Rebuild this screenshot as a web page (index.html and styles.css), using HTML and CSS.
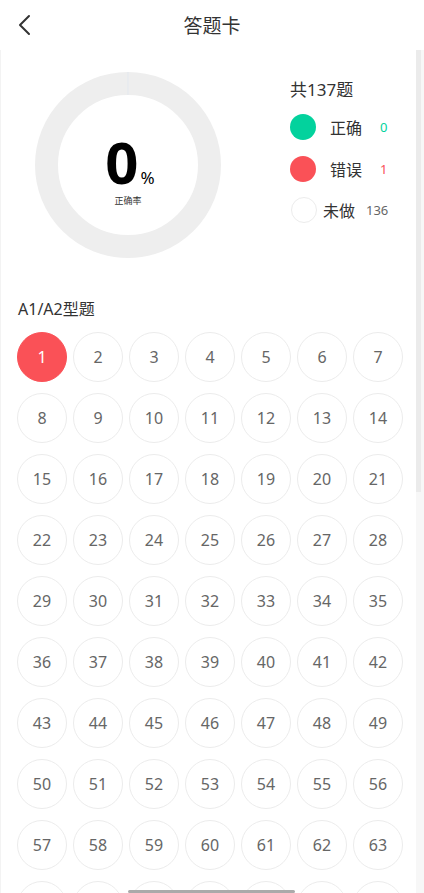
FILE: index.html
```html
<!DOCTYPE html>
<html lang="zh-CN">
<head>
  <meta charset="UTF-8" />
  <title>答题卡</title>
  <link rel="stylesheet" href="styles.css">
</head>
<body>
  <div class="header">
    <svg class="back" width="16" height="24" viewBox="0 0 16 24">
      <path d="M12 3 L3 12 L12 21" fill="none" stroke="#333" stroke-width="2" stroke-linecap="round" stroke-linejoin="round"/>
    </svg>
    <h1>答题卡</h1>
  </div>

  <div class="content">
    <div class="summary">
      <div class="chart">
        <svg width="186" height="186" viewBox="0 0 186 186">
          <circle cx="93" cy="93" r="81.5" fill="none" stroke="#eeeeee" stroke-width="23"/>
          <line x1="93" y1="0" x2="93" y2="23" stroke="#e3e8ef" stroke-width="1"/>
        </svg>
        <div class="rate">
          <div class="rate-num">0<span>%</span></div>
          <div class="rate-label">正确率</div>
        </div>
      </div>

      <div class="legend">
        <div class="total">共137题</div>
        <div class="legend-row">
          <span class="dot green"></span>
          <span class="legend-name">正确</span>
          <span class="legend-count green-text">0</span>
        </div>
        <div class="legend-row">
          <span class="dot red"></span>
          <span class="legend-name">错误</span>
          <span class="legend-count red-text">1</span>
        </div>
        <div class="legend-row">
          <span class="dot empty"></span>
          <span class="legend-name tight">未做</span>
          <span class="legend-count gray-text">136</span>
        </div>
      </div>
    </div>

    <h3 class="section-title">A1/A2型题</h3>
    <div class="grid" id="grid"></div>

    <div class="scroll-track"><div class="scroll-thumb"></div></div>
  </div>

  <div class="home-bar"></div>

  <script>
    const grid = document.getElementById("grid");
    let html = "";
    for (let i = 1; i <= 70; i++) {
      html += `<div class="cell${i === 1 ? " wrong" : ""}">${i}</div>`;
    }
    grid.innerHTML = html;
  </script>
</body>
</html>
```

FILE: styles.css
```css
* {
  box-sizing: border-box;
}

html, body {
  margin: 0;
  padding: 0;
  height: 893px;
  overflow: hidden;
}

body {
  font-family: "Noto Sans", "Noto Sans CJK SC", sans-serif;
  background: #fff;
  color: #333;
}

.header {
  height: 50px;
  display: flex;
  align-items: center;
  justify-content: center;
  position: relative;
}

.header .back {
  position: absolute;
  left: 17px;
  top: 13px;
}

.header h1 {
  margin: 0;
  font-size: 19px;
  font-weight: 400;
  color: #333;
}

.content {
  position: relative;
  height: 843px;
  overflow: hidden;
  border-left: 1px solid #f3f3f3;
}

/* fake scrollbar, the screenshot shows one */
.scroll-track {
  position: absolute;
  top: 0;
  right: 0;
  width: 8px;
  height: 100%;
  background: #f7f7f7;
}

.scroll-thumb {
  width: 5px;
  height: 442px;
  background: #ebebeb;
}

.summary {
  display: flex;
  padding: 22px 0 0 34px;
}

.chart {
  position: relative;
  width: 186px;
  height: 186px;
}

.chart svg {
  display: block;
}

.rate {
  position: absolute;
  inset: 0;
  display: flex;
  flex-direction: column;
  align-items: center;
  justify-content: center;
}

.rate-num {
  font-size: 58px;
  font-weight: 700;
  color: #000;
  line-height: 0.8;
  margin-left: 4px;
  margin-top: 14px;
}

.rate-num span {
  font-size: 17px;
  font-weight: 400;
  margin-left: 2px;
}

.rate-label {
  font-size: 9px;
  line-height: 1;
  color: #333;
  margin-top: 11px;
}

.legend {
  margin-left: 69px;
  padding-top: 4px;
}

.total {
  font-size: 17px;
  color: #333;
  margin-bottom: 13px;
}

.legend-row {
  display: flex;
  align-items: center;
  height: 26px;
  margin-bottom: 15.5px;
}

.dot {
  width: 26px;
  height: 26px;
  border-radius: 50%;
  flex-shrink: 0;
}

.dot.green {
  background: #03d29d;
}

.dot.red {
  background: #fa5157;
}

.dot.empty {
  border: 1px solid #ececec;
  margin-left: 1px;
}

.legend-name {
  font-size: 16px;
  color: #333;
  margin-left: 14px;
  width: 50px;
}

.legend-name.tight {
  margin-left: 6px;
  width: 43px;
}

.legend-count {
  font-size: 13px;
}

.green-text {
  color: #03d29d;
}

.red-text {
  color: #fa5157;
}

.gray-text {
  color: #666;
}

.section-title {
  margin: 38px 0 0 17px;
  font-size: 16px;
  font-weight: 400;
  color: #333;
}

.grid {
  display: grid;
  grid-template-columns: repeat(7, 50px);
  column-gap: 6px;
  row-gap: 11px;
  padding: 12px 0 30px 16px;
}

.cell {
  width: 50px;
  height: 50px;
  border-radius: 50%;
  border: 1px solid #ececec;
  display: flex;
  align-items: center;
  justify-content: center;
  font-size: 16px;
  color: #666;
}

.cell.wrong {
  background: #fa5157;
  border-color: #fa5157;
  color: #fff;
}

.home-bar {
  position: fixed;
  left: 128px;
  bottom: 0;
  width: 167px;
  height: 3px;
  background: #aaa;
  border-radius: 2px;
}
```
